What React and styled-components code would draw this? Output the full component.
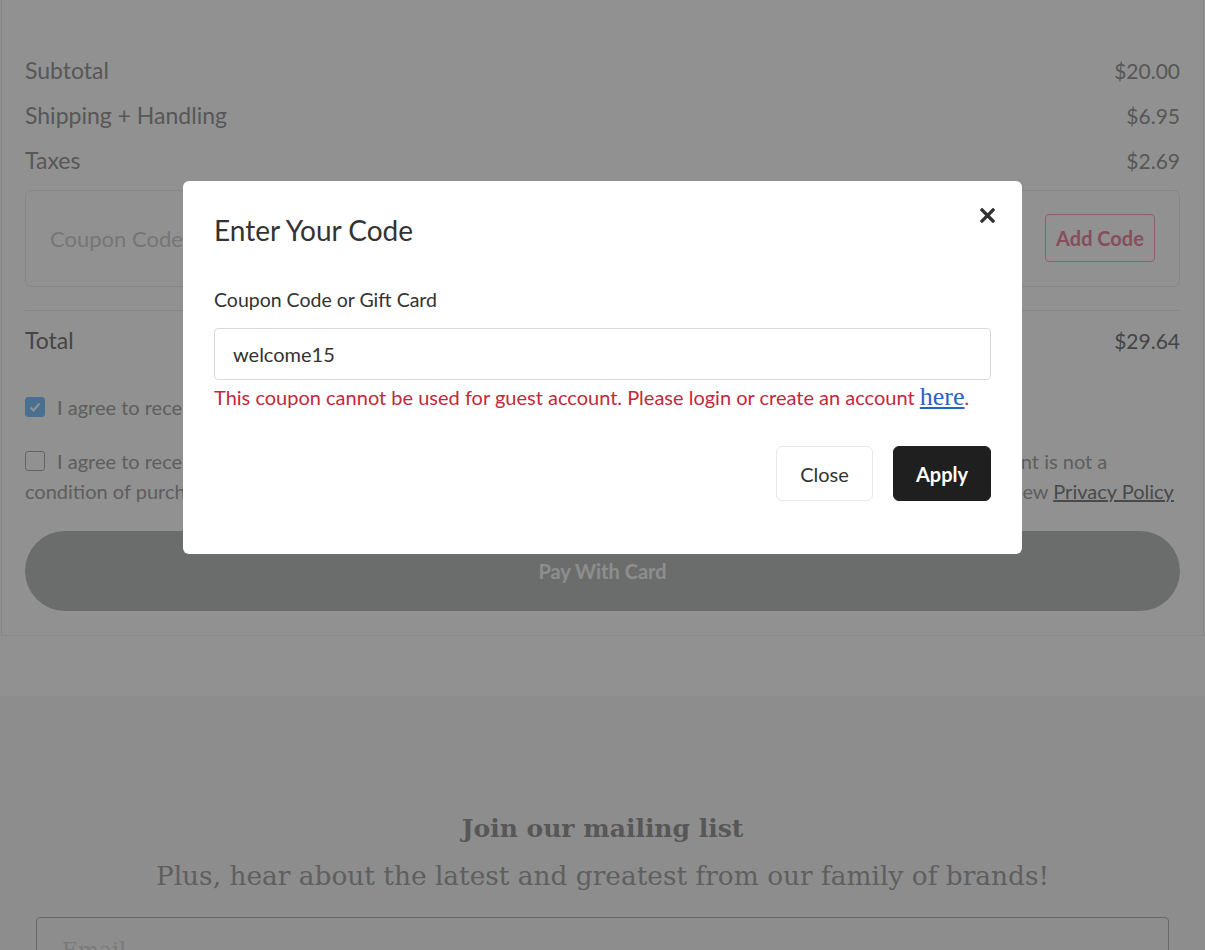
import styled, { createGlobalStyle } from "styled-components";

const GlobalStyle = createGlobalStyle`
  body {
    margin: 0;
    background: #ffffff;
    font-family: Lato, "Noto Sans", sans-serif;
  }
`;

const summary = [
  { label: "Subtotal", value: "$20.00" },
  { label: "Shipping + Handling", value: "$6.95" },
  { label: "Taxes", value: "$2.69" },
];

const Page = styled.div`
  width: 1205px;
  height: 950px;
  overflow: hidden;
`;

const CartCard = styled.section`
  margin: 0 1px 0 1px;
  border: 1px solid #ececec;
  border-top: none;
  padding: 48px 23px 24px 23px;
`;

const Row = styled.div`
  display: flex;
  justify-content: space-between;
  align-items: baseline;
  line-height: 45px;
  color: ${(p) => (p.$strong ? "#7a7a7a" : "#9a9a9a")};
`;

const RowLabel = styled.span`
  font-size: 23px;
`;

const RowValue = styled.span`
  font-size: 21px;
`;

const TotalRow = styled(Row)`
  border-top: 1px solid #ececec;
  margin-top: 23px;
  padding: 7px 0 8px;
`;

const CouponBox = styled.div`
  margin-top: 7px;
  height: 95px;
  border: 1px solid #ebebeb;
  border-radius: 6px;
  display: flex;
  align-items: center;
  justify-content: space-between;
  padding: 0 24px;
`;

const CouponPlaceholder = styled.span`
  font-size: 22px;
  color: #d0d0d0;
`;

const AddCodeButton = styled.button`
  width: 110px;
  height: 48px;
  margin-top: -2px;
  border: 1px solid #f2a9bc;
  border-radius: 4px;
  background: #ffffff;
  color: #ec8aa3;
  font-family: Lato, sans-serif;
  font-size: 20px;
  font-weight: 700;
`;

const ConsentRow = styled.label`
  display: flex;
  align-items: flex-start;
  gap: 12px;
  margin-top: ${(p) => p.$gap}px;
  font-size: 20px;
  line-height: 30px;
  color: #a6a6a6;
`;

const ConsentText = styled.span`
  flex: 1;
  margin-left: ${(p) => (p.$wrap ? "-32px" : "0")};
  text-indent: ${(p) => (p.$wrap ? "32px" : "0")};
  white-space: ${(p) => (p.$wrap ? "nowrap" : "normal")};
`;

const Box = styled.span`
  flex: none;
  width: 18px;
  height: 18px;
  margin-top: 5px;
  border-radius: 3px;
  border: 1px solid ${(p) => (p.$checked ? "#80c4ff" : "#b0b0b0")};
  background: ${(p) => (p.$checked ? "#80c4ff" : "#ffffff")};
  display: flex;
  align-items: center;
  justify-content: center;
`;

const PolicyLink = styled.a`
  color: #828282;
  text-decoration: underline;
`;

const PayButton = styled.button`
  display: block;
  width: 100%;
  height: 80px;
  margin-top: 25px;
  border: none;
  border-radius: 40px;
  background: #bbc0be;
  color: #f7faf9;
  font-family: Lato, sans-serif;
  font-size: 20px;
  font-weight: 700;
`;

const Mailing = styled.section`
  margin-top: 60px;
  background: #f8f8f8;
  padding: 113px 36px 0 36px;
  text-align: center;
  font-family: "DejaVu Serif", serif;
  color: #a8a8a8;
`;

const MailTitle = styled.h3`
  margin: 0;
  font-size: 25px;
  line-height: 39px;
  font-weight: 700;
  color: #9a9a9a;
`;

const MailSub = styled.p`
  margin: 8px 0 0 0;
  font-size: 26.4px;
  line-height: 39px;
`;

const EmailInput = styled.div`
  margin-top: 22px;
  height: 60px;
  border: 1px solid #b8b8b8;
  border-radius: 4px;
  text-align: left;
  padding: 20px 25px 0;
  font-size: 22px;
  line-height: 26px;
  color: #d6d6d6;
`;

const Backdrop = styled.div`
  position: fixed;
  inset: 0;
  background: rgba(0, 0, 0, 0.43);
`;

const ModalLayer = styled.div`
  position: fixed;
  inset: 0;
  display: flex;
  justify-content: center;
  align-items: flex-start;
  padding-top: 181px;
`;

const Modal = styled.div`
  width: 839px;
  box-sizing: border-box;
  background: #ffffff;
  border-radius: 6px;
  padding: 31px 31px 53px 31px;
  color: #333333;
`;

const ModalHeader = styled.div`
  display: flex;
  justify-content: space-between;
  align-items: flex-start;
`;

const ModalTitle = styled.h2`
  margin: 0;
  font-size: 28px;
  line-height: 36px;
  font-weight: 400;
`;

const CloseIcon = styled.button`
  border: none;
  background: none;
  padding: 0;
  margin: -4px -4px 0 0;
  width: 15px;
  height: 15px;
  display: flex;
`;

const FieldLabel = styled.div`
  margin-top: 38px;
  font-size: 19.5px;
  line-height: 28px;
`;

const CodeInput = styled.div`
  margin-top: 14px;
  height: 50px;
  border: 1px solid #d9d9d9;
  border-radius: 4px;
  padding: 0 18px;
  display: flex;
  align-items: center;
  font-size: 20px;
`;

const ErrorText = styled.div`
  margin-top: 3px;
  font-size: 20px;
  line-height: 28px;
  color: #c4283c;
`;

const HereLink = styled.a`
  font-family: "Liberation Serif", serif;
  font-size: 26px;
  color: #2563c9;
  text-decoration: underline;
`;

const Actions = styled.div`
  margin-top: 35px;
  display: flex;
  justify-content: flex-end;
  gap: 20px;
`;

const ActionButton = styled.button`
  height: 55px;
  width: ${(p) => p.$w}px;
  border-radius: 6px;
  border: 1px solid ${(p) => (p.$dark ? "#1f1f1f" : "#e8e8e8")};
  background: ${(p) => (p.$dark ? "#1f1f1f" : "#ffffff")};
  color: ${(p) => (p.$dark ? "#ffffff" : "#333333")};
  font-family: Lato, sans-serif;
  font-size: 20px;
  line-height: 24px;
  padding: 0;
  font-weight: ${(p) => (p.$dark ? 700 : 400)};
`;

const Check = () => (
  <svg width="14" height="14" viewBox="0 0 14 14">
    <path d="M2.5 7.5 L5.5 10.5 L11.5 3.5" fill="none" stroke="#fff" strokeWidth="2.2" />
  </svg>
);

export default function App() {
  return (
    <>
      <GlobalStyle />
      <Page>
        <CartCard>
          {summary.map(({ label, value }) => (
            <Row key={label}>
              <RowLabel>{label}</RowLabel>
              <RowValue>{value}</RowValue>
            </Row>
          ))}
          <CouponBox>
            <CouponPlaceholder>Coupon Code or Gift Card</CouponPlaceholder>
            <AddCodeButton>Add Code</AddCodeButton>
          </CouponBox>
          <TotalRow $strong>
            <RowLabel>Total</RowLabel>
            <RowValue>$29.64</RowValue>
          </TotalRow>
          <ConsentRow $gap={21}>
            <Box $checked>
              <Check />
            </Box>
            <ConsentText>I agree to receive emails about offers, news and product updates.</ConsentText>
          </ConsentRow>
          <ConsentRow $gap={24}>
            <Box />
            <ConsentText $wrap>
              I agree to receive recurring automated marketing text messages from us at the phone number provided. Consent is not a
              <br />
              condition of purchase. Msg &amp; data rates may apply. Reply HELP for help, STOP to cancel anytime. To learn more, view{" "}
              <PolicyLink>Privacy Policy</PolicyLink>
            </ConsentText>
          </ConsentRow>
          <PayButton>Pay With Card</PayButton>
        </CartCard>
        <Mailing>
          <MailTitle>Join our mailing list</MailTitle>
          <MailSub>Plus, hear about the latest and greatest from our family of brands!</MailSub>
          <EmailInput>Email</EmailInput>
        </Mailing>
      </Page>
      <Backdrop />
      <ModalLayer>
        <Modal>
          <ModalHeader>
            <ModalTitle>Enter Your Code</ModalTitle>
            <CloseIcon aria-label="close">
              <svg width="15" height="15" viewBox="0 0 15 15">
                <path d="M2 2 L13 13 M13 2 L2 13" stroke="#333" strokeWidth="3.3" strokeLinecap="square" />
              </svg>
            </CloseIcon>
          </ModalHeader>
          <FieldLabel>Coupon Code or Gift Card</FieldLabel>
          <CodeInput>welcome15</CodeInput>
          <ErrorText>
            This coupon cannot be used for guest account. Please login or create an account <HereLink>here</HereLink>.
          </ErrorText>
          <Actions>
            <ActionButton $w={97}>Close</ActionButton>
            <ActionButton $w={98} $dark>
              Apply
            </ActionButton>
          </Actions>
        </Modal>
      </ModalLayer>
    </>
  );
}
